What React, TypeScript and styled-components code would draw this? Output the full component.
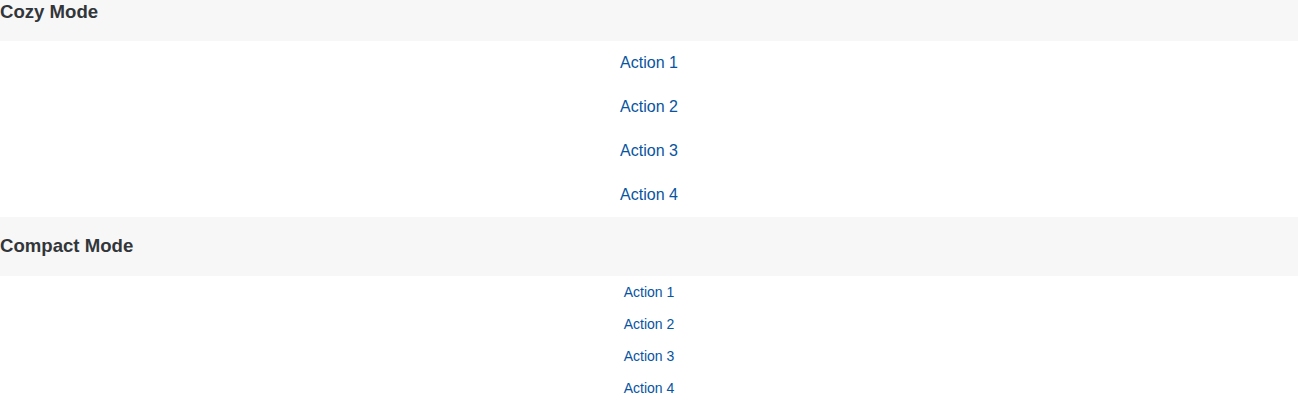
import styled, { createGlobalStyle } from "styled-components";

const Global = createGlobalStyle`
  html, body {
    margin: 0;
    padding: 0;
    background: #ffffff;
    font-family: "Liberation Sans", Arial, sans-serif;
  }
`;

const Page = styled.div`
  display: flex;
  flex-direction: column;
`;

const Section = styled.section`
  display: flex;
  flex-direction: column;
`;

const Heading = styled.h3<{ $first?: boolean }>`
  margin: 0;
  background: #f7f7f7;
  color: #32363a;
  font-size: 18.6px;
  font-weight: bold;
  line-height: 22px;
  padding: ${(p) => (p.$first ? "1px 0 18px 0" : "18px 0 19px 0")};
`;

const ActionList = styled.div`
  display: flex;
  flex-direction: column;
  align-items: center;
`;

const ActionButton = styled.button<{ $compact?: boolean }>`
  appearance: none;
  border: none;
  background: transparent;
  color: #0854a0;
  font-family: "Liberation Sans", Arial, sans-serif;
  font-size: ${(p) => (p.$compact ? "14px" : "16px")};
  height: ${(p) => (p.$compact ? "32px" : "44px")};
  padding: 0 12px;
  cursor: pointer;
`;

const actions = ["Action 1", "Action 2", "Action 3", "Action 4"];

export default function App() {
  return (
    <Page>
      <Global />
      <Section>
        <Heading $first>Cozy Mode</Heading>
        <ActionList>
          {actions.map((a) => (
            <ActionButton key={a}>{a}</ActionButton>
          ))}
        </ActionList>
      </Section>
      <Section>
        <Heading>Compact Mode</Heading>
        <ActionList>
          {actions.map((a) => (
            <ActionButton key={a} $compact>
              {a}
            </ActionButton>
          ))}
        </ActionList>
      </Section>
    </Page>
  );
}
